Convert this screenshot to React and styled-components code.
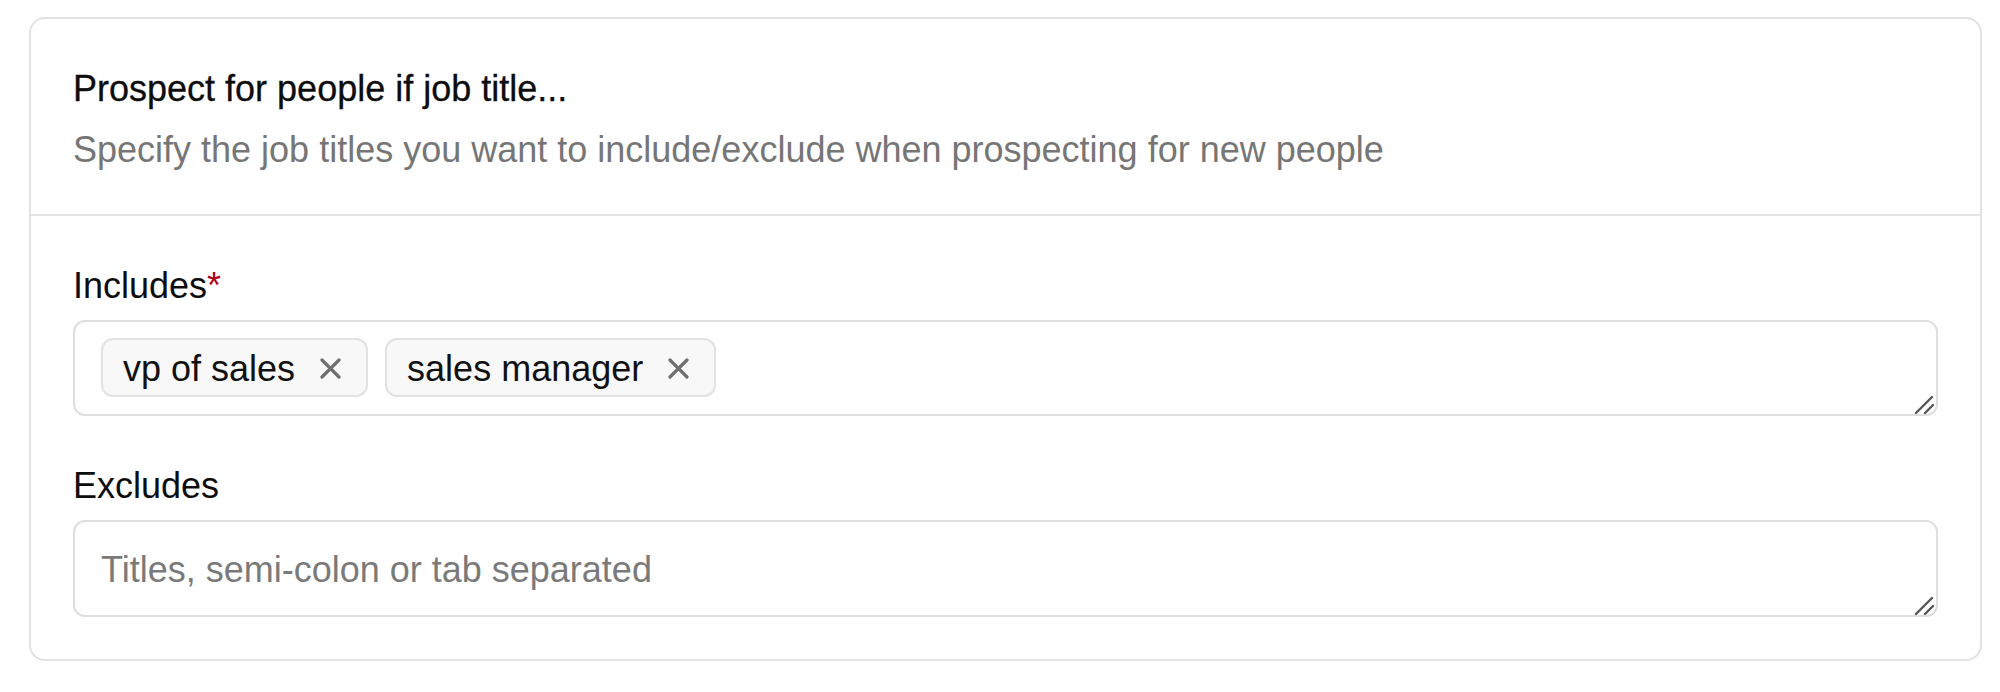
import React from 'react';
import styled, { createGlobalStyle } from 'styled-components';

const GlobalStyle = createGlobalStyle`
  html, body {
    margin: 0;
    padding: 0;
    background: #ffffff;
  }
  body {
    font-family: "Liberation Sans", Helvetica, Arial, sans-serif;
    color: #111111;
  }
`;

const Page = styled.div`
  padding: 17px 18px 0 29px;
`;

const Card = styled.section`
  border: 2px solid #e2e2e2;
  border-radius: 16px;
  background: #ffffff;
`;

const Header = styled.header`
  padding: 45px 42px 39px;
  display: flex;
  flex-direction: column;
  gap: 11px;
  border-bottom: 2px solid #e2e2e2;
`;

const Title = styled.h2`
  margin: 0;
  font-size: 36px;
  line-height: 50px;
  font-weight: 400;
  color: #0d0d0d;
  -webkit-text-stroke: 0.3px #0d0d0d;
`;

const Subtitle = styled.p`
  margin: 0;
  font-size: 36px;
  line-height: 50px;
  color: #767676;
`;

const Body = styled.div`
  padding: 45px 42px 42px;
  display: flex;
  flex-direction: column;
  gap: 45px;
`;

const Field = styled.div`
  display: flex;
  flex-direction: column;
  gap: 9px;
`;

const Label = styled.label`
  font-size: 36px;
  line-height: 50px;
  color: #0d0d0d;
`;

const Required = styled.span`
  color: #b0001a;
`;

const InputWrap = styled.div`
  position: relative;
`;

const Grip = styled.svg`
  position: absolute;
  right: 4px;
  bottom: 2px;
  pointer-events: none;
`;

const TagBox = styled.div`
  box-sizing: border-box;
  height: 96px;
  border: 2px solid #dedede;
  border-radius: 12px;
  padding: 16px 26px;
  display: flex;
  align-items: flex-start;
  flex-wrap: wrap;
  gap: 17px;
  overflow: hidden;
`;

const Chip = styled.span`
  box-sizing: border-box;
  height: 59px;
  display: inline-flex;
  align-items: center;
  gap: 25px;
  padding: 2px 25px 0 20px;
  border: 2px solid #e2e2e2;
  border-radius: 12px;
  background: #f8f8f8;
  font-size: 36px;
  line-height: 50px;
  color: #111111;
`;

const RemoveButton = styled.button`
  border: 0;
  padding: 0;
  background: none;
  display: flex;
  cursor: pointer;
  color: #6f6f6f;
`;

const TextArea = styled.textarea`
  box-sizing: border-box;
  display: block;
  width: 100%;
  height: 97px;
  border: 2px solid #dedede;
  border-radius: 12px;
  padding: 23px 26px 20px;
  font-family: inherit;
  font-size: 36px;
  line-height: 50px;
  color: #111111;
  resize: none;
  outline: none;
  overflow: hidden;

  &::placeholder {
    color: #7a7a7a;
  }
`;

function CloseIcon() {
  return (
    <svg width="21" height="21" viewBox="0 0 21 21" fill="none">
      <path d="M2 2L19 19M19 2L2 19" stroke="currentColor" strokeWidth="3.2" strokeLinecap="round" />
    </svg>
  );
}

function ResizeGrip() {
  return (
    <Grip width="20" height="20" viewBox="0 0 20 20" fill="none">
      <path d="M2 19L18 3M11 19L19 11" stroke="#555555" strokeWidth="2.4" strokeLinecap="round" />
    </Grip>
  );
}

const includes = ['vp of sales', 'sales manager'];

export default function App() {
  return (
    <Page>
      <GlobalStyle />
      <Card>
        <Header>
          <Title>Prospect for people if job title...</Title>
          <Subtitle>Specify the job titles you want to include/exclude when prospecting for new people</Subtitle>
        </Header>
        <Body>
          <Field>
            <Label>Includes<Required>*</Required></Label>
            <InputWrap>
              <TagBox>
                {includes.map((tag) => (
                  <Chip key={tag}>
                    {tag}
                    <RemoveButton aria-label={`Remove ${tag}`}>
                      <CloseIcon />
                    </RemoveButton>
                  </Chip>
                ))}
              </TagBox>
              <ResizeGrip />
            </InputWrap>
          </Field>
          <Field>
            <Label>Excludes</Label>
            <InputWrap>
              <TextArea placeholder="Titles, semi-colon or tab separated" />
              <ResizeGrip />
            </InputWrap>
          </Field>
        </Body>
      </Card>
    </Page>
  );
}
